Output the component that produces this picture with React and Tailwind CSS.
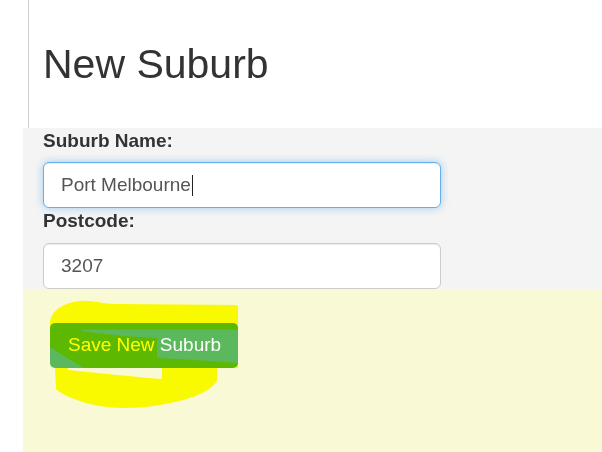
import React from 'react';

const FieldBox = ({ value, focused, caret }) => (
  <div
    className={`w-[398px] h-[46px] rounded-[6px] bg-white border pl-[17px] flex items-center text-[19px] text-[#555] ${
      focused
        ? 'border-[#66afe9] shadow-[inset_0_1px_1px_rgba(0,0,0,0.075),0_0_8px_rgba(102,175,233,0.6)]'
        : 'border-[#ccc] shadow-[inset_0_1px_1px_rgba(0,0,0,0.075)]'
    }`}
  >
    <span>{value}</span>
    {caret && <span className="inline-block w-px h-[21px] bg-[#222] ml-[1px]" />}
  </div>
);

// highlighter scribble drawn over the save button
const Scribble = () => (
  <svg
    className="absolute left-[17px] top-0 pointer-events-none mix-blend-multiply"
    width="210"
    height="130"
    viewBox="40 290 210 130"
  >
    <path
      fill="#ffff00"
      fillRule="evenodd"
      d="M50,321 C52,311 62,303 80,301 C92,300 102,304 116,304 L236,305 L238,306 L238,368 L217,368 L217,381 C210,392 190,400 160,405 C135,409 110,409 90,404 C75,400 62,395 56,389 L55,368 L50,368 Z
         M82,329.5 L238,329.5 L238,363 C210,361 180,359 157,358 L157,338 C135,337 110,335 82,331 Z
         M50,347 C58,352 70,360 84,368 L50,368 Z
         M68,368 L162,368 L162,379 C135,377 100,373 68,370 Z"
    />
  </svg>
);

export default function App() {
  return (
    <div className="min-h-[452px] bg-white font-['Liberation_Sans',Arial,sans-serif] text-[#333]">
      <div className="ml-[28px] h-[128px] border-l border-[#ccc] pl-[14px] pt-[42px]">
        <h1 className="text-[41px] leading-[45px] font-normal">New Suburb</h1>
      </div>

      <div className="ml-[23px] bg-[#f4f4f4] pl-[20px] pt-[2px] pb-[1px]">
        <label className="block text-[19px] leading-[22px] font-bold mb-[10px]">Suburb Name:</label>
        <FieldBox value="Port Melbourne" focused caret />
        <label className="block text-[19px] leading-[22px] font-bold mt-[2px] mb-[11px]">Postcode:</label>
        <FieldBox value="3207" />
      </div>

      <div className="relative ml-[23px] h-[162px] bg-[#f9f9d6] pl-[27px] pt-[33px]">
        <button className="w-[188px] h-[45px] rounded-[5px] bg-[#5cb85c] text-white text-[19px] text-left pl-[18px]">
          Save New Suburb
        </button>
        <Scribble />
      </div>
    </div>
  );
}
